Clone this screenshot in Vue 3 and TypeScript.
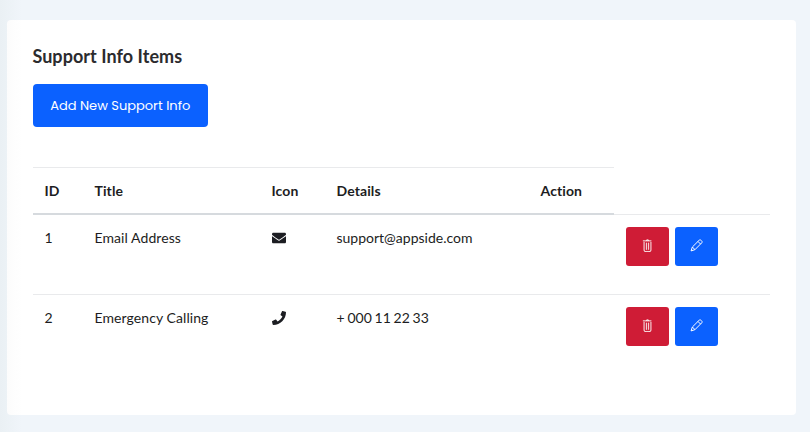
<script setup lang="ts">
interface SupportItem {
  id: number
  title: string
  icon: 'envelope' | 'phone'
  details: string
}

const headings: string[] = ['ID', 'Title', 'Icon', 'Details', 'Action']

const items: SupportItem[] = [
  { id: 1, title: 'Email Address', icon: 'envelope', details: 'support@appside.com' },
  { id: 2, title: 'Emergency Calling', icon: 'phone', details: '+ 000 11 22 33' },
]
</script>

<template>
  <main class="page">
    <section class="card">
      <h4 class="heading">Support Info Items</h4>
      <button class="btn add" type="button"><span>Add New Support Info</span></button>
      <table class="table">
        <colgroup>
          <col class="c-id" /><col class="c-title" /><col class="c-icon" />
          <col class="c-details" /><col class="c-action" /><col />
        </colgroup>
        <thead>
          <tr>
            <th v-for="h in headings" :key="h">{{ h }}</th>
            <td class="spare"></td>
          </tr>
        </thead>
        <tbody>
          <tr v-for="item in items" :key="item.id">
            <td>{{ item.id }}</td>
            <td class="title">{{ item.title }}</td>
            <td>
              <svg class="glyph" viewBox="0 0 512 512" fill="currentColor">
                <path
                  v-if="item.icon === 'envelope'"
                  d="M502.3 190.8c3.9-3.1 9.7-.2 9.7 4.7V400c0 26.5-21.5 48-48 48H48c-26.5 0-48-21.5-48-48V195.6c0-5 5.7-7.8 9.7-4.7 22.4 17.4 52.1 39.5 154.1 113.6 21.1 15.4 56.7 47.8 92.2 47.6 35.7.3 72-32.8 92.3-47.6 102-74.1 131.6-96.3 154-113.7zM256 320c23.2.4 56.6-29.2 73.4-41.4 132.7-96.3 142.8-104.7 173.4-128.7 5.8-4.5 9.2-11.5 9.2-18.9v-19c0-26.5-21.5-48-48-48H48c-26.5 0-48 21.5-48 48v19c0 7.4 3.4 14.3 9.2 18.9 30.6 23.9 40.7 32.4 173.4 128.7 16.8 12.2 50.2 41.8 73.4 41.4z"
                />
                <path
                  v-else
                  d="M493.4 24.6l-104-24c-11.3-2.6-22.9 3.3-27.5 13.9l-48 112c-4.2 9.8-1.4 21.3 6.9 28l60.6 49.6c-36 76.7-98.9 140.5-177.2 177.2l-49.6-60.6c-6.8-8.3-18.2-11.1-28-6.9l-112 48C3.9 366.5-2 378.1.6 389.4l24 104C27.1 504.2 36.7 512 48 512c256.1 0 464-207.500 464-464 0-11.200-7.700-20.900-18.600-23.400z"
                />
              </svg>
            </td>
            <td class="details">{{ item.details }}</td>
            <td></td>
            <td class="action-cell">
              <div class="actions">
                <button class="btn small danger" type="button" aria-label="Delete">
                  <svg viewBox="0.5 0 17 17" fill="currentColor">
                    <path
                      d="M10.935 2.016c-.218-.869-.999-1.516-1.935-1.516-.932 0-1.710.643-1.931 1.516H3v1h11v-1h-3.065zM9 1.500c.382 0 .705.221.875.516H8.128C8.297 1.721 8.620 1.500 9 1.500zM13 4v10.516c0 .827-.673 1.500-1.500 1.500h-5C5.673 16.016 5 15.343 5 14.516V4H4v10.516c0 1.378 1.122 2.500 2.500 2.500h5c1.378 0 2.500-1.122 2.500-2.500V4h-1zM8 5v9H7V5h1zM11 5v9h-1V5h1z"
                      stroke="currentColor"
                      stroke-width="0.2"
                    />
                  </svg>
                </button>
                <button class="btn small" type="button" aria-label="Edit">
                  <svg viewBox="0 0 17 17" fill="none" stroke="currentColor" stroke-width="1.3" stroke-linejoin="round">
                    <path d="M1.400 15.600l1.700-5.100 8.700-8.700c.8-.8 2-.8 2.800 0l.6.6c.8.8.8 2 0 2.800l-8.700 8.700zM3.100 10.500l3.400 3.400M10.400 3.200l3.400 3.400" />
                  </svg>
                </button>
              </div>
            </td>
          </tr>
        </tbody>
      </table>
    </section>
  </main>
</template>

<style>
body {
  margin: 0;
}
</style>

<style scoped>
.page {
  box-sizing: border-box;
  height: 432px;
  padding: 20px 14px 17px 7px;
  background: linear-gradient(to right, #eaf0f4, #f0f5fa 22px);
  font-family: Lato, sans-serif;
  font-variant-ligatures: none;
  color: #212529;
}
.card {
  box-sizing: border-box;
  height: 395px;
  padding: 25px 26px 0;
  border-radius: 4px;
  background: linear-gradient(to right, #fcfcfc, #fff 15px);
}
.heading {
  margin: 0 0 0 -0.6px;
  font-size: 18px;
  line-height: 22px;
  font-weight: 700;
  letter-spacing: 0.05px;
  color: #2b2b2e;
}
.btn {
  display: flex;
  align-items: center;
  justify-content: center;
  padding: 0;
  border: 0;
  border-radius: 4px;
  background: #0b61ff;
  color: #fff;
}
.add {
  width: 175px;
  height: 43px;
  margin-top: 17px;
  padding-right: 0.6px;
  font-family: Poppins, Inter, sans-serif;
  font-size: 13px;
  white-space: nowrap;
}
.table {
  width: 737px;
  margin-top: 40px;
  table-layout: fixed;
  border-collapse: separate;
  border-spacing: 0;
  font-size: 14px;
  line-height: 24px;
  color: #1c1d22;
}
.c-id { width: 50px; }
.c-title { width: 177px; }
.c-icon { width: 65px; }
.c-details { width: 204px; }
.c-action { width: 85px; }
th,
td {
  box-sizing: border-box;
  padding: 0 11.5px;
  text-align: left;
}
th {
  height: 48px;
  border-top: 1px solid #e9eaec;
  border-bottom: 2px solid #d6dade;
  font-weight: 700;
  letter-spacing: 0.1px;
}
.spare {
  border-bottom: 1px solid #e9eaec;
}
tbody td {
  height: 79px;
  padding-top: 11px;
  vertical-align: top;
}
tbody tr + tr td {
  height: 80px;
  border-top: 1px solid #e9eaec;
}
.title {
  letter-spacing: 0.08px;
}
.details {
  word-spacing: -0.8px;
}
.glyph {
  display: block;
  width: 14px;
  height: 14px;
  margin-top: 5px;
}
tbody .action-cell {
  padding: 12px 12px 0;
}
.actions {
  display: flex;
  gap: 6px;
}
.small {
  width: 43px;
  height: 39px;
  border-radius: 3px;
  padding-bottom: 2px;
}
.small svg {
  width: 13px;
  height: 13px;
}
.danger {
  background: #cf1c36;
}
</style>
